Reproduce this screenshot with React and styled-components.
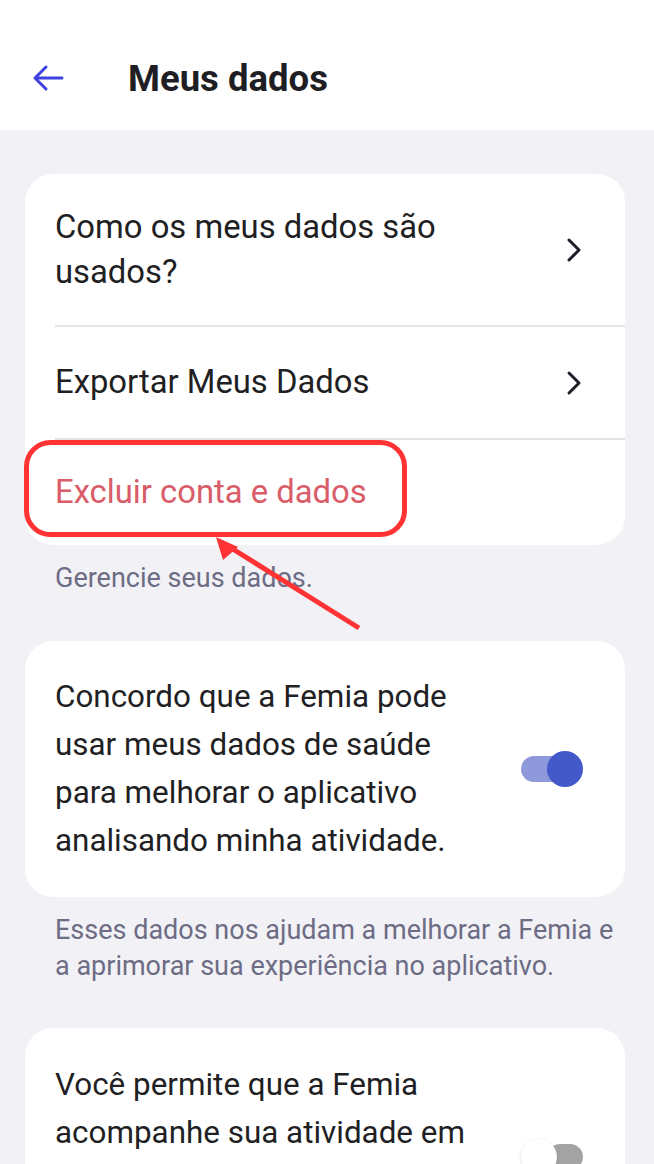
import React from "react";
import styled, { createGlobalStyle } from "styled-components";

const Global = createGlobalStyle`
  html, body { margin: 0; padding: 0; background: #f1f1f6; }
  body { font-family: Roboto, "Noto Sans", sans-serif; -webkit-font-smoothing: antialiased; }
  * { box-sizing: border-box; }
`;

const Page = styled.div`
  position: relative;
  width: 654px;
  height: 1164px;
  overflow: hidden;
  background: #f1f1f6;
`;

const Header = styled.header`
  height: 130px;
  background: #ffffff;
  display: flex;
  align-items: center;
  padding: 26px 0 0 31px;
`;

const BackButton = styled.button`
  border: none;
  background: none;
  padding: 0;
  width: 34px;
  height: 34px;
  display: flex;
  align-items: center;
  justify-content: center;
`;

const Title = styled.h1`
  margin: 0 0 0 63px;
  font-size: 36.5px;
  font-weight: 700;
  color: #1e1e24;
`;

const Content = styled.main`
  padding: 44px 29px 0 25px;
  display: flex;
  flex-direction: column;
`;

const Card = styled.section`
  background: #ffffff;
  border-radius: 28px;
  overflow: hidden;
  margin-top: ${(p) => p.$mt || 0}px;
`;

const NavRow = styled.div`
  margin-left: 30px;
  padding-right: 42px;
  min-height: ${(p) => p.$h}px;
  display: flex;
  align-items: center;
  justify-content: space-between;
  border-bottom: ${(p) => (p.$divider ? "2px solid #e3e3e8" : "none")};
`;

const RowLabel = styled.span`
  font-size: 32.8px;
  line-height: 45px;
  color: ${(p) => (p.$danger ? "#d95c69" : "#1f1f24")};
  max-width: 440px;
`;

const Caption = styled.p`
  margin: 15px 0 0 30px;
  font-size: 27px;
  line-height: 36px;
  color: #6d6c84;
`;

const ToggleRow = styled.div`
  display: flex;
  align-items: center;
  justify-content: space-between;
  padding: ${(p) => p.$pad};
`;

const ToggleText = styled.span`
  font-size: 31.4px;
  line-height: 48px;
  color: #1f1f24;
  max-width: 420px;
`;

const Switch = styled.div`
  position: relative;
  width: 62px;
  height: 37px;
  flex-shrink: 0;
`;

const Track = styled.div`
  position: absolute;
  top: 5px;
  height: 26px;
  border-radius: 13px;
  left: ${(p) => (p.$on ? "0" : "26px")};
  width: ${(p) => (p.$on ? "52px" : "36px")};
  background: ${(p) => (p.$on ? "#8f98da" : "#a3a3a3")};
`;

const Thumb = styled.div`
  position: absolute;
  top: 0;
  ${(p) => (p.$on ? "right: 0;" : "left: 0;")}
  width: 36px;
  height: 36px;
  border-radius: 50%;
  background: ${(p) => (p.$on ? "#4359c9" : "#ffffff")};
  box-shadow: ${(p) => (p.$on ? "none" : "0 1px 3px rgba(0,0,0,0.18)")};
`;

const Overlay = styled.svg`
  position: absolute;
  left: 0;
  top: 0;
  pointer-events: none;
`;

const Chevron = () => (
  <svg width="18" height="26" viewBox="0 0 18 26">
    <path d="M4 3 L14 13 L4 23" fill="none" stroke="#1f1f2a" strokeWidth="3" strokeLinecap="round" strokeLinejoin="round" />
  </svg>
);

const Toggle = ({ on }) => (
  <Switch>
    <Track $on={on} />
    <Thumb $on={on} />
  </Switch>
);

export default function App() {
  return (
    <Page>
      <Global />
      <Header>
        <BackButton aria-label="Voltar">
          <svg width="34" height="32" viewBox="0 0 34 32">
            <path d="M31 16 H4 M15 5 L4 16 L15 27" fill="none" stroke="#3d42e0" strokeWidth="3" strokeLinecap="round" strokeLinejoin="round" />
          </svg>
        </BackButton>
        <Title>Meus dados</Title>
      </Header>
      <Content>
        <Card>
          <NavRow $h={153} $divider>
            <RowLabel>Como os meus dados são usados?</RowLabel>
            <Chevron />
          </NavRow>
          <NavRow $h={113} $divider>
            <RowLabel>Exportar Meus Dados</RowLabel>
            <Chevron />
          </NavRow>
          <NavRow $h={105}>
            <RowLabel $danger>Excluir conta e dados</RowLabel>
          </NavRow>
        </Card>
        <Caption>Gerencie seus dados.</Caption>
        <Card $mt={45}>
          <ToggleRow $pad="32px 42px 32px 30px">
            <ToggleText>Concordo que a Femia pode usar meus dados de saúde para melhorar o aplicativo analisando minha atividade.</ToggleText>
            <Toggle on />
          </ToggleRow>
        </Card>
        <Caption>Esses dados nos ajudam a melhorar a Femia e a aprimorar sua experiência no aplicativo.</Caption>
        <Card $mt={44}>
          <ToggleRow $pad="33px 42px 33px 30px">
            <ToggleText>Você permite que a Femia acompanhe sua atividade em segundo plano para dados mais precisos?</ToggleText>
            <Toggle />
          </ToggleRow>
        </Card>
      </Content>
      <Overlay width="654" height="1164" viewBox="0 0 654 1164">
        <rect x="26.5" y="442.5" width="378" height="92" rx="24" fill="none" stroke="#ff3333" strokeWidth="5" />
        <line x1="359" y1="628" x2="228" y2="546" stroke="#ff3333" strokeWidth="5" />
        <polygon points="216,537 223,560 238,547" fill="#ff3333" />
      </Overlay>
    </Page>
  );
}
